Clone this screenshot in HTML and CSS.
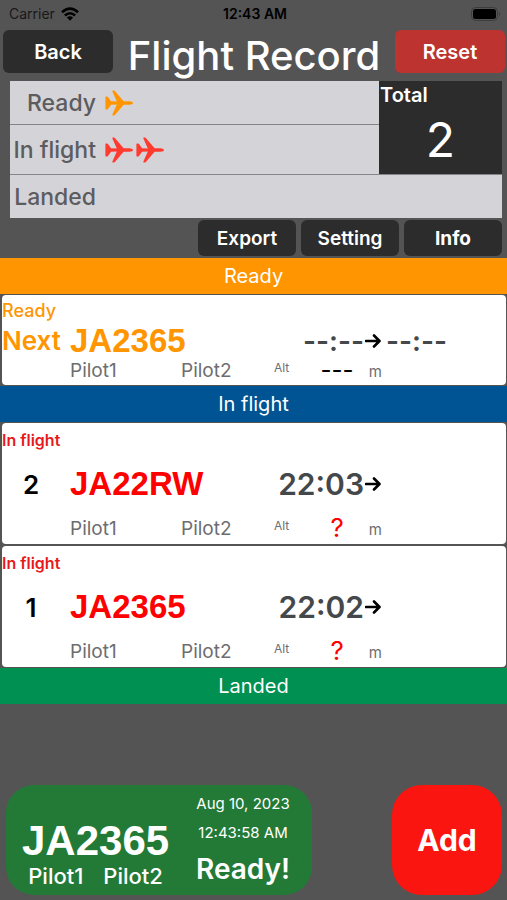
FILE: index.html
```html
<!DOCTYPE html>
<html lang="en">
<head>
<meta charset="utf-8">
<meta name="viewport" content="width=device-width, initial-scale=1">
<title>Flight Record</title>
<link rel="stylesheet" href="styles.css">
</head>
<body>
<svg class="defs" aria-hidden="true">
  <symbol id="plane" viewBox="0 0 28 26">
    <path d="M1 6.500 H2 Q2.600 6.500 3 7 L6 11.200 L11.800 11.400 L7.400 1.600 Q7 .6 7.800 .6 H9 Q9.600 .6 10.100 1.200 L18.600 11.200 H24.200 Q28 11.600 28 13 Q28 14.400 24.200 14.800 H18.600 L10.100 24.800 Q9.600 25.400 9 25.400 H7.800 Q7 25.400 7.400 24.400 L11.800 14.600 L6 14.800 L3 19 Q2.600 19.500 2 19.500 H1 Q.4 19.500 .4 18.800 V7.200 Q.4 6.500 1 6.500 Z" fill="currentColor"/>
  </symbol>
  <symbol id="arrow" viewBox="0 0 16 14">
    <path d="M1 7 H14 M9 1.500 L14.500 7 L9 12.500" fill="none" stroke="currentColor" stroke-width="2.600" stroke-linecap="round" stroke-linejoin="round"/>
  </symbol>
</svg>

<div class="status-bar">
  <span class="carrier">Carrier
    <svg class="wifi" viewBox="0 0 18 14" aria-hidden="true">
      <g fill="none" stroke="currentColor" stroke-width="2.600">
        <path d="M1 5.300 Q9 -2 17 5.300"/>
        <path d="M3.900 8.500 Q9 4 14.100 8.500"/>
      </g>
      <path d="M9 13.800 L5.900 10.600 Q9 8.100 12.100 10.600 Z" fill="currentColor"/>
    </svg>
  </span>
  <span class="clock">12:43 AM</span>
  <svg class="battery" viewBox="0 0 30 14" aria-hidden="true">
    <rect x=".5" y=".5" width="26" height="13" rx="4" fill="none" stroke="#3c3c3c"/>
    <rect x="2" y="2" width="23" height="10" rx="2.500" fill="#000"/>
    <path d="M28 4.500 Q30 7 28 9.500 Z" fill="#3c3c3c"/>
  </svg>
</div>

<header class="title-bar">
  <button class="btn btn-nav" type="button">Back</button>
  <h1>Flight Record</h1>
  <button class="btn btn-nav btn-reset" type="button">Reset</button>
</header>

<section class="summary">
  <div class="summary-row ready"><span class="summary-label">Ready</span><svg class="plane"><use href="#plane"/></svg></div>
  <div class="summary-row flying"><span class="summary-label">In flight</span><svg class="plane"><use href="#plane"/></svg><svg class="plane"><use href="#plane"/></svg></div>
  <div class="total"><span class="total-label">Total</span><span class="total-value">2</span></div>
  <div class="summary-row landed"><span class="summary-label">Landed</span></div>
</section>

<nav class="tools">
  <button class="btn btn-tool" type="button">Export</button>
  <button class="btn btn-tool" type="button">Setting</button>
  <button class="btn btn-tool strong" type="button">Info</button>
</nav>

<main>
  <h2 class="section-head head-ready">Ready</h2>
  <article class="record record-ready">
    <span class="state">Ready</span>
    <span class="number">Next</span>
    <span class="reg">JA2365</span>
    <span class="depart">--:--</span>
    <svg class="arrow"><use href="#arrow"/></svg>
    <span class="arrive">--:--</span>
    <span class="pilot1">Pilot1</span>
    <span class="pilot2">Pilot2</span>
    <span class="altitude"><span class="alt-label">Alt</span><span class="alt-value">---</span><span class="unit">m</span></span>
  </article>

  <h2 class="section-head head-flight">In flight</h2>
  <article class="record record-flight">
    <span class="state">In flight</span>
    <span class="number">2</span>
    <span class="reg">JA22RW</span>
    <span class="depart">22:03</span>
    <svg class="arrow"><use href="#arrow"/></svg>
    <span class="pilot1">Pilot1</span>
    <span class="pilot2">Pilot2</span>
    <span class="altitude"><span class="alt-label">Alt</span><span class="alt-value">?</span><span class="unit">m</span></span>
  </article>
  <article class="record record-flight">
    <span class="state">In flight</span>
    <span class="number">1</span>
    <span class="reg">JA2365</span>
    <span class="depart">22:02</span>
    <svg class="arrow"><use href="#arrow"/></svg>
    <span class="pilot1">Pilot1</span>
    <span class="pilot2">Pilot2</span>
    <span class="altitude"><span class="alt-label">Alt</span><span class="alt-value">?</span><span class="unit">m</span></span>
  </article>

  <h2 class="section-head head-landed">Landed</h2>
</main>

<footer class="actions">
  <button class="next-card" type="button">
    <span class="next-plane">
      <span class="next-reg">JA2365</span>
      <span class="next-pilots"><span>Pilot1</span><span>Pilot2</span></span>
    </span>
    <span class="next-info">
      <span>Aug 10, 2023</span>
      <span>12:43:58 AM</span>
      <span class="next-state">Ready!</span>
    </span>
  </button>
  <button class="add" type="button">Add</button>
</footer>
</body>
</html>
```
FILE: styles.css
```css
* { box-sizing: border-box; }

body {
  margin: 0;
  min-height: 100vh;
  display: flex;
  flex-direction: column;
  background: #545454;
  color: #fff;
  font-family: Inter, "Liberation Sans", sans-serif;
}

h1, h2 { margin: 0; }
button { border: 0; padding: 0; color: inherit; font-family: inherit; cursor: pointer; }
svg { display: block; }
.defs { position: absolute; width: 0; height: 0; }

/* Status bar */
.status-bar {
  display: grid;
  grid-template-columns: 1fr auto 1fr;
  align-items: center;
  height: 27px;
  padding: 0 6px 0 9px;
  color: #000;
  font-size: 14px;
}
.carrier { display: flex; align-items: center; gap: 6px; color: #181818; }
.wifi { width: 18px; height: 14px; color: #000; }
.clock { font-weight: 600; }
.battery { width: 30px; height: 14px; justify-self: end; }

/* Title bar */
.title-bar {
  display: flex;
  align-items: flex-start;
  justify-content: space-between;
  padding: 3px 2px 0 3px;
}
h1 { font-size: 40px; line-height: 51px; font-weight: 500; white-space: nowrap; }
.btn { border-radius: 6px; background: #2c2c2c; }
.btn-nav { width: 110px; height: 43px; font-size: 20px; font-weight: 600; }
.btn-reset { background: #bd3330; }

/* Summary */
.summary {
  display: grid;
  grid-template-columns: 3fr 1fr;
  grid-template-rows: 43px 49px 43px;
  row-gap: 1px;
  margin: 0 5px 0 10px;
  background: #858589;
}
.summary-row {
  display: flex;
  align-items: center;
  gap: 3px;
  background: #d4d3d8;
  color: #5c5c5f;
  font-size: 23px;
  font-weight: 500;
}
.summary-label { width: 86px; margin-right: 6px; text-align: right; white-space: nowrap; }
.plane { width: 28px; height: 26px; }
.ready .plane { color: #ff9500; }
.flying .plane { color: #ff3b30; }
.landed { grid-column: 1 / -1; }
.total {
  grid-column: 2;
  grid-row: 1 / 3;
  display: flex;
  flex-direction: column;
  background: #2c2c2c;
}
.total-label { padding-left: 1px; font-size: 20px; line-height: 28px; font-weight: 600; }
.total-value { font-size: 48px; line-height: 62px; text-align: center; }

.tools { display: flex; justify-content: flex-end; gap: 5px; padding: 2px 5px 2px 0; }
.btn-tool { width: 98px; height: 36px; font-size: 19px; font-weight: 600; }
.strong { font-weight: 700; }

/* Records */
.section-head {
  height: 36px;
  line-height: 36px;
  font-size: 20px;
  font-weight: 400;
  text-align: center;
}
.head-ready { background: #ff9500; }
.head-flight { background: #005493; }
.head-landed { background: #009051; }

.record {
  display: grid;
  grid-template-columns: 68px 111fr 93fr 90fr 18px 124fr;
  align-items: center;
  margin: 1px 1px 1px 2px;
  border-radius: 4px;
  background: #fff;
  color: #6d6d6f;
}
.record-ready { grid-template-rows: 31px 29px 30px; }
.record-flight { grid-template-rows: 33px 56px 32px; }
.record + .record { margin-top: 2px; }
.state { grid-area: 1 / 1 / 2 / 3; font-weight: 600; }
.number { grid-area: 2 / 1; font-size: 26px; font-weight: 600; }
.reg { grid-area: 2 / 2 / 3 / 4; font: bold 33px/36px "Liberation Sans", sans-serif; }
.depart, .arrive { grid-row: 2; font-size: 30px; line-height: 26px; font-weight: 600; color: #45484b; }
.depart { grid-column: 4; text-align: right; }
.arrow { grid-area: 2 / 5; width: 16px; height: 14px; justify-self: center; color: #000; }
.arrive { grid-column: 6; padding-left: 4px; }
.pilot1 { grid-area: 3 / 2; font-size: 19px; }
.pilot2 { grid-area: 3 / 3; font-size: 19px; }
.altitude { grid-area: 3 / 4 / 4 / 6; display: flex; align-items: center; justify-content: space-between; }
.alt-label { font-size: 12px; line-height: 20px; padding-bottom: 4px; }
.alt-value { width: 40px; margin-left: 16px; font-size: 26px; line-height: 20px; text-align: center; }
.unit { font-size: 15px; line-height: 20px; padding-top: 4px; }

.record-ready .depart, .record-ready .arrive { font-size: 28px; }
.record-ready .state, .record-ready .number, .record-ready .reg { color: #ff9500; }
.record-ready .state { font-size: 18px; font-weight: 500; }
.record-ready .alt-value { font-size: 24px; color: #000; }
.record-flight .state { font-size: 16px; color: #e8191c; }
.record-flight .number { color: #000; padding-right: 10px; text-align: center; }
.record-flight .reg { color: #f00; }
.record-flight .alt-value { color: #f00; }

/* Bottom actions */
.actions {
  display: flex;
  justify-content: space-between;
  margin-top: auto;
  padding: 5px 5px 5px 6px;
}
.next-card {
  display: flex;
  justify-content: space-between;
  width: 306px;
  height: 110px;
  padding: 0 22px 0 16px;
  border-radius: 28px;
  background: #237a37;
}
.next-plane { display: flex; flex-direction: column; align-self: flex-end; padding-bottom: 6px; }
.next-reg { font: bold 42px/44px "Liberation Sans", sans-serif; }
.next-pilots { display: flex; justify-content: center; gap: 20px; font-size: 22px; line-height: 26px; font-weight: 500; }
.next-info { display: flex; flex-direction: column; align-items: center; padding-top: 4px; font-size: 15px; line-height: 29px; }
.next-state { font-size: 28px; line-height: 44px; font-weight: 600; }
.add { width: 110px; height: 110px; border-radius: 30px; background: #fb1510; font-size: 30px; font-weight: 700; }
```
